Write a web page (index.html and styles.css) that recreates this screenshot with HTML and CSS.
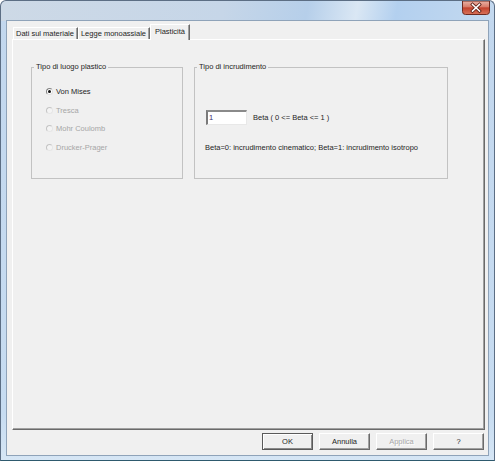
FILE: index.html
```html
<!DOCTYPE html>
<html>
<head>
<meta charset="utf-8">
<link rel="stylesheet" href="styles.css">
</head>
<body>
<div class="window">
  <div class="titlebar">
    <span class="close">
      <svg width="28" height="14" viewBox="0 0 28 14">
        <defs>
          <linearGradient id="cg" x1="0" y1="0" x2="0" y2="1">
            <stop offset="0" stop-color="#eab3a6"/>
            <stop offset="0.45" stop-color="#d77a68"/>
            <stop offset="0.5" stop-color="#c2412c"/>
            <stop offset="1" stop-color="#d8735a"/>
          </linearGradient>
        </defs>
        <path d="M0.5 0 H27.5 V10.5 Q27.5 13.5 24.5 13.5 H3.5 Q0.5 13.5 0.5 10.5 Z" fill="url(#cg)" stroke="#6e2a20"/>
        <path d="M10.5 3.5 L17.5 10 M17.5 3.5 L10.5 10" stroke="#5a1d14" stroke-width="3.2" stroke-linecap="square"/>
        <path d="M10.5 3.5 L17.5 10 M17.5 3.5 L10.5 10" stroke="#ffffff" stroke-width="1.6" stroke-linecap="square"/>
      </svg>
    </span>
  </div>
  <div class="client">
    <div class="tabs">
      <div class="tab">Dati sul materiale</div>
      <div class="tab">Legge monoassiale</div>
      <div class="tab active">Plasticità</div>
    </div>
    <div class="panel">
      <div class="groups">
        <fieldset class="group g1">
          <legend>Tipo di luogo plastico</legend>
          <div class="radios">
            <div class="radio"><span class="dot checked"></span><span>Von Mises</span></div>
            <div class="radio disabled"><span class="dot"></span><span>Tresca</span></div>
            <div class="radio disabled"><span class="dot"></span><span>Mohr Coulomb</span></div>
            <div class="radio disabled"><span class="dot"></span><span>Drucker-Prager</span></div>
          </div>
        </fieldset>
        <fieldset class="group g2">
          <legend>Tipo di incrudimento</legend>
          <div class="beta-row">
            <div class="input">1</div>
            <span class="beta-label">Beta ( 0 &lt;= Beta &lt;= 1 )</span>
          </div>
          <div class="note">Beta=0: incrudimento cinematico; Beta=1: incrudimento isotropo</div>
        </fieldset>
      </div>
    </div>
    <div class="buttons">
      <div class="btn default">OK</div>
      <div class="btn">Annulla</div>
      <div class="btn disabled">Applica</div>
      <div class="btn">?</div>
    </div>
  </div>
</div>
</body>
</html>
```

FILE: styles.css
```css
html, body {
  margin: 0;
  padding: 0;
  background: #ffffff;
}

body {
  font-family: "Liberation Sans", Arial, sans-serif;
  font-size: 7.5px;
  color: #1e1e1e;
}

.window {
  width: 495px;
  height: 461px;
  box-sizing: border-box;
  border: 1px solid #5c6e84;
  border-bottom-color: #2e5a6e;
  border-radius: 6px 6px 0 0;
  background:
    linear-gradient(100deg, #cdd9e6 0%, #c6d6e8 45%, #b6cfea 62%, #dae7f4 72%, #b3d0ef 80%, #c4d9ef 100%) top / 100% 20px no-repeat,
    linear-gradient(180deg, #c2d7ee 0%, #c7dcf1 90%, #d6e6f5 100%);
  display: flex;
  flex-direction: column;
  padding: 0 5px 4px 5px;
}

.titlebar {
  height: 19px;
  display: flex;
  justify-content: flex-end;
  align-items: flex-start;
  flex: none;
}

.close {
  display: block;
  width: 28px;
  height: 14px;
  margin-right: -1px;
}

.close svg {
  display: block;
}

.client {
  flex: 1;
  background: #f0f0f0;
  border: 1px solid #8fa3b9;
  display: flex;
  flex-direction: column;
  padding: 3px 3px 5px 5px;
  min-height: 0;
}

.tabs {
  height: 15px;
  display: flex;
  align-items: flex-end;
  padding-left: 1px;
  flex: none;
  position: relative;
  z-index: 1;
}

.tab {
  height: 12px;
  line-height: 11px;
  box-sizing: border-box;
  padding: 0 3px 0 2px;
  border-top: 1px solid #ffffff;
  border-left: 1px solid #ffffff;
  border-right: 1px solid #6a6a6a;
  box-shadow: inset -1px 0 0 #a0a0a0;
  background: #f0f0f0;
  white-space: nowrap;
}

.tab.active {
  height: 16px;
  line-height: 14px;
  margin-bottom: -1px;
  padding: 0 4px 0 4px;
}

.panel {
  flex: 1;
  border: 1px solid;
  border-color: #ffffff #6a6a6a #6a6a6a #ffffff;
  box-shadow: inset -1px -1px 0 #a0a0a0;
  padding: 22px 0 0 18px;
}

.groups {
  display: flex;
  align-items: flex-start;
  gap: 11px;
}

.group {
  margin: 0;
  padding: 0;
  border: 1px solid #c2c2c2;
  box-sizing: border-box;
  height: 117px;
}

.group legend {
  padding: 0 2px;
  margin-left: 2px;
  line-height: 10px;
  height: 10px;
}

.g1 {
  width: 152px;
}

.g2 {
  width: 254px;
}

.radios {
  display: flex;
  flex-direction: column;
  padding: 10px 0 0 14px;
}

.radio {
  height: 18.7px;
  display: flex;
  align-items: center;
  gap: 3px;
}

.radio.disabled {
  color: #a6a6a6;
}

.dot {
  width: 7px;
  height: 7px;
  box-sizing: border-box;
  border-radius: 50%;
  border: 1px solid;
  border-color: #9a9a9a #dcdcdc #dcdcdc #9a9a9a;
  background: #ffffff;
  position: relative;
}

.radio.disabled .dot {
  border-color: #c4c4c4 #e6e6e6 #e6e6e6 #c4c4c4;
  background: #f4f4f4;
}

.dot.checked {
  border-color: #808080 #e0e0e0 #e0e0e0 #808080;
}

.dot.checked::after {
  content: "";
  position: absolute;
  left: 1px;
  top: 1px;
  width: 3px;
  height: 3px;
  border-radius: 50%;
  background: #111111;
}

.beta-row {
  display: flex;
  align-items: center;
  gap: 6px;
  margin: 38px 0 0 11px;
}

.input {
  width: 41px;
  height: 15px;
  box-sizing: border-box;
  background: #ffffff;
  border-style: solid;
  border-width: 2px 1px 1px 2px;
  border-color: #8a8a8a #e8e8e8 #e8e8e8 #7a7a7a;
  line-height: 11px;
  padding-left: 1px;
  color: #3b2a6e;
}

.note {
  margin: 18px 0 0 10px;
  line-height: 10px;
}

.buttons {
  flex: none;
  display: flex;
  justify-content: flex-end;
  gap: 6px;
  margin-top: 3px;
  padding-right: 1px;
}

.btn {
  width: 51px;
  height: 17px;
  box-sizing: border-box;
  border: 1px solid;
  border-color: #ffffff #6a6a6a #6a6a6a #ffffff;
  box-shadow: inset -1px -1px 0 #a0a0a0;
  display: flex;
  align-items: center;
  justify-content: center;
  background: #f0f0f0;
}

.btn.default {
  border-color: #5a5a5a;
  box-shadow: inset 1px 1px 0 #ffffff, inset -1px -1px 0 #8a8a8a;
}

.btn.disabled {
  color: #a8a8a8;
  text-shadow: 1px 1px 0 #ffffff;
}
```
